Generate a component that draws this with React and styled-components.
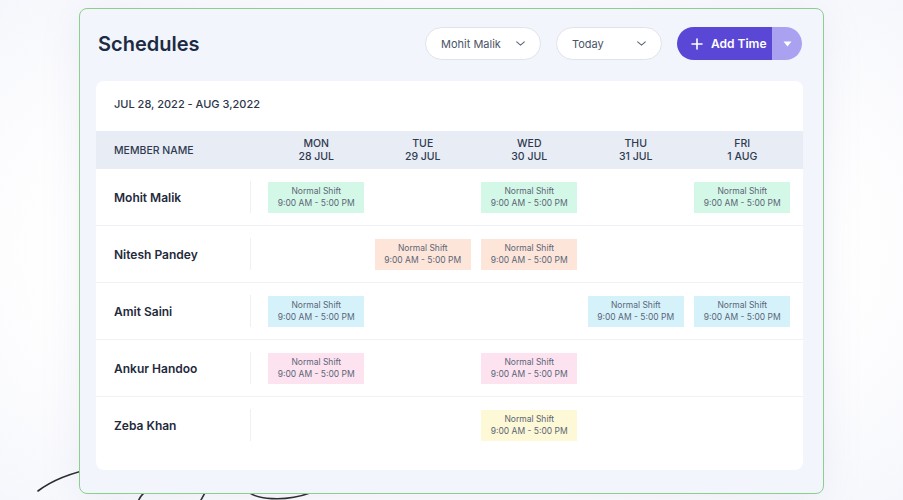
import React from 'react';
import styled, { createGlobalStyle } from 'styled-components';

const GlobalStyle = createGlobalStyle`
  body {
    margin: 0;
    background: #ffffff;
    font-family: Inter, "Noto Sans", sans-serif;
  }
`;

const Page = styled.div`
  position: relative;
  width: 903px;
  height: 500px;
  overflow: hidden;
  background: radial-gradient(ellipse at 50% 50%, #ffffff 60%, #f6f7fc 100%);
`;

const Doodle = styled.svg`
  position: absolute;
  left: 0;
  top: 420px;
  z-index: 0;
`;

const Panel = styled.div`
  position: relative;
  z-index: 1;
  margin: 8px 0 0 79px;
  width: 745px;
  height: 486px;
  box-sizing: border-box;
  border: 1px solid #8ccf8c;
  border-radius: 8px;
  background: #f2f5fb;
  box-shadow: 0 4px 40px rgba(120, 130, 190, 0.12);
  padding: 18px 20px 0 16px;
`;

const TopBar = styled.div`
  display: flex;
  align-items: center;
  height: 33px;
  margin-bottom: 21px;
`;

const Title = styled.h1`
  margin: 0 0 0 2px;
  font-size: 20px;
  font-weight: 600;
  color: #1c2b43;
  flex: 1;
`;

const Select = styled.div`
  display: flex;
  align-items: center;
  justify-content: space-between;
  box-sizing: border-box;
  width: ${p => p.$w}px;
  height: 33px;
  padding: 0 13px 0 15px;
  margin-right: 15px;
  background: #fff;
  border: 1px solid #dfe3eb;
  border-radius: 17px;
  font-size: 11px;
  color: #4a5468;
`;

const AddButton = styled.div`
  display: flex;
  height: 33px;
  width: 125px;
  margin-right: 1px;
  border-radius: 17px;
  overflow: hidden;
`;

const AddMain = styled.div`
  flex: 1;
  display: flex;
  align-items: center;
  gap: 8px;
  padding-left: 14px;
  background: #5b47d6;
  color: #fff;
  font-size: 12px;
  font-weight: 600;
`;

const AddCaret = styled.div`
  width: 30px;
  display: flex;
  align-items: center;
  justify-content: center;
  background: #aba1f1;
`;

const Card = styled.div`
  background: #fff;
  border-radius: 8px;
  height: 389px;
  overflow: hidden;
`;

const DateRange = styled.div`
  height: 50px;
  box-sizing: border-box;
  padding: 0 0 4px 18px;
  display: flex;
  align-items: center;
  font-size: 11px;
  font-weight: 500;
  color: #2c3649;
`;

const Grid = styled.div`
  display: grid;
  grid-template-columns: 167px repeat(5, 106.5px);
`;

const HeadRow = styled(Grid)`
  height: 38px;
  background: #e8edf5;
  align-items: center;
  font-size: 10.5px;
  font-weight: 500;
  color: #2f3a50;
`;

const HeadName = styled.div`
  padding-left: 18px;
`;

const HeadDay = styled.div`
  text-align: center;
  line-height: 13px;
`;

const Row = styled(Grid)`
  height: 57px;
  border-bottom: 1px solid ${p => (p.$last ? 'transparent' : '#eef1f5')};
  box-sizing: border-box;
  align-items: center;
`;

const NameCell = styled.div`
  height: 32px;
  display: flex;
  align-items: center;
  padding-left: 18px;
  margin-right: 12px;
  border-right: 1px solid #eef0f4;
  font-size: 12px;
  font-weight: 600;
  color: #1f2a3d;
`;

const DayCell = styled.div`
  display: flex;
  justify-content: center;
`;

const shiftColors = {
  green: '#d4f8e7',
  peach: '#fde5da',
  cyan: '#d5f2fb',
  pink: '#fce3ef',
  yellow: '#fdf8d5',
};

const Shift = styled.div`
  width: 96px;
  height: 31px;
  background: ${p => shiftColors[p.$color]};
  display: flex;
  flex-direction: column;
  align-items: center;
  justify-content: center;
  font-size: 8.5px;
  line-height: 12px;
  color: #5b6577;
`;

const days = [
  ['MON', '28 JUL'],
  ['TUE', '29 JUL'],
  ['WED', '30 JUL'],
  ['THU', '31 JUL'],
  ['FRI', '1 AUG'],
];

const members = [
  { name: 'Mohit Malik', color: 'green', shifts: [0, 2, 4] },
  { name: 'Nitesh Pandey', color: 'peach', shifts: [1, 2] },
  { name: 'Amit Saini', color: 'cyan', shifts: [0, 3, 4] },
  { name: 'Ankur Handoo', color: 'pink', shifts: [0, 2] },
  { name: 'Zeba Khan', color: 'yellow', shifts: [2] },
];

const Chevron = () => (
  <svg width="13" height="13" viewBox="0 0 24 24" fill="none" stroke="#5a6478" strokeWidth="2" strokeLinecap="round" strokeLinejoin="round">
    <path d="M5 9l7 6 7-6" />
  </svg>
);

export default function App() {
  return (
    <Page>
      <GlobalStyle />
      <Doodle width="400" height="80" viewBox="0 0 400 80">
        <path d="M38 71 C 55 58, 75 52, 95 48" fill="none" stroke="#2a2a2a" strokeWidth="1.6" strokeLinecap="round" />
        <path d="M138 82 C 140 76, 143 73, 148 70" fill="none" stroke="#2a2a2a" strokeWidth="1.6" strokeLinecap="round" />
        <path d="M200 82 C 202 78, 204 74, 207 70" fill="none" stroke="#2a2a2a" strokeWidth="1.6" strokeLinecap="round" />
        <path d="M246 70 C 255 80, 285 82, 310 73" fill="none" stroke="#2a2a2a" strokeWidth="1.6" strokeLinecap="round" />
      </Doodle>
      <Panel>
        <TopBar>
          <Title>Schedules</Title>
          <Select $w={116}>Mohit Malik <Chevron /></Select>
          <Select $w={106}>Today <Chevron /></Select>
          <AddButton>
            <AddMain>
              <svg width="12" height="12" viewBox="0 0 12 12" stroke="#fff" strokeWidth="1.6" strokeLinecap="round">
                <path d="M6 1v10M1 6h10" />
              </svg>
              Add Time
            </AddMain>
            <AddCaret>
              <svg width="9" height="6" viewBox="0 0 9 6">
                <path d="M0.5 0.5h8L4.5 5.5z" fill="#fff" />
              </svg>
            </AddCaret>
          </AddButton>
        </TopBar>
        <Card>
          <DateRange>JUL 28, 2022 - AUG 3,2022</DateRange>
          <HeadRow>
            <HeadName>MEMBER NAME</HeadName>
            {days.map(([d, date]) => (
              <HeadDay key={d}>{d}<br />{date}</HeadDay>
            ))}
          </HeadRow>
          {members.map((m, i) => (
            <Row key={m.name} $last={i === members.length - 1}>
              <NameCell>{m.name}</NameCell>
              {days.map((_, di) => (
                <DayCell key={di}>
                  {m.shifts.includes(di) && (
                    <Shift $color={m.color}>
                      <span>Normal Shift</span>
                      <span>9:00 AM - 5:00 PM</span>
                    </Shift>
                  )}
                </DayCell>
              ))}
            </Row>
          ))}
        </Card>
      </Panel>
    </Page>
  );
}
